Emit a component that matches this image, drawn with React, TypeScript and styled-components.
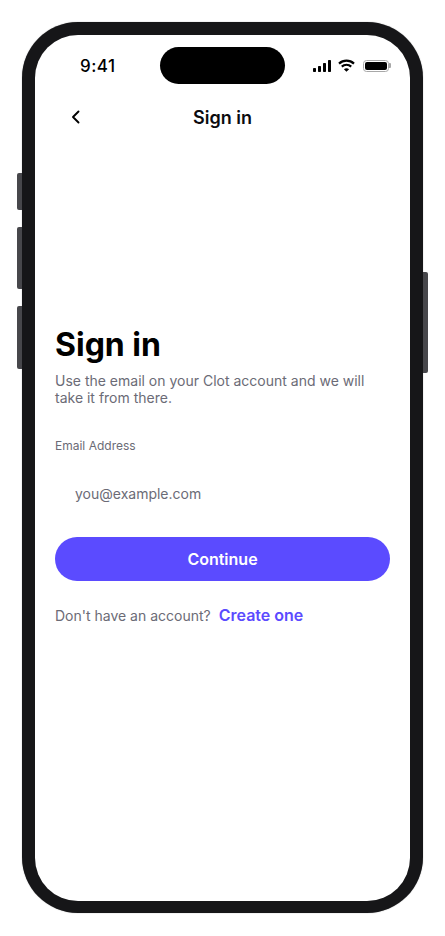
import React from "react";
import styled, { createGlobalStyle } from "styled-components";

const GlobalStyle = createGlobalStyle`
  html, body {
    margin: 0;
    padding: 0;
    background: #fff;
  }
  * {
    box-sizing: border-box;
  }
`;

function App() {
  return (
    <>
      <GlobalStyle />
      <Page>
        <Phone>
          <SideButton $side="left" $top={151} $height={37} />
          <SideButton $side="left" $top={205} $height={62} />
          <SideButton $side="left" $top={284} $height={63} />
          <SideButton $side="right" $top={250} $height={101} />
          <Screen>
            <StatusBar>
              <Time>9:41</Time>
              <Island />
              <StatusIcons>
                <svg width="18" height="12" viewBox="0 0 18 12" fill="#000">
                  <rect x="0" y="8" width="3" height="4" rx="0.8" />
                  <rect x="5" y="6" width="3" height="6" rx="0.8" />
                  <rect x="10" y="3" width="3" height="9" rx="0.8" />
                  <rect x="15" y="0" width="3" height="12" rx="0.8" />
                </svg>
                <svg width="17" height="13" viewBox="0 0 17 13" fill="none" stroke="#000" strokeWidth="2.2">
                  <path d="M1 4.6C5.2 0.6 11.8 0.6 16 4.6" />
                  <path d="M3.8 7.6C6.4 5.1 10.6 5.1 13.2 7.6" />
                  <path d="M8.5 12.8L5.9 10.2C7.4 8.9 9.6 8.9 11.1 10.2Z" fill="#000" stroke="none" />
                </svg>
                <Battery>
                  <BatteryFill />
                </Battery>
              </StatusIcons>
            </StatusBar>
            <NavBar>
              <BackButton aria-label="Back">
                <svg width="10" height="14" viewBox="0 0 10 14" fill="none" stroke="#000" strokeWidth="1.9" strokeLinecap="round" strokeLinejoin="round">
                  <path d="M7.5 1.5L2 7l5.5 5.5" />
                </svg>
              </BackButton>
              <NavTitle>Sign in</NavTitle>
            </NavBar>
            <Content>
              <Title>Sign in</Title>
              <Subtitle>Use the email on your Clot account and we will take it from there.</Subtitle>
              <Label htmlFor="email">Email Address</Label>
              <EmailInput id="email" type="email" placeholder="you@example.com" />
              <ContinueButton>Continue</ContinueButton>
              <Footer>
                <FooterText>Don't have an account?</FooterText>
                <CreateLink>Create one</CreateLink>
              </Footer>
            </Content>
          </Screen>
        </Phone>
      </Page>
    </>
  );
}

export default App;

const Page = styled.div`
  width: 445px;
  height: 936px;
  padding: 22px 22px 23px 22px;
  font-family: Inter, "Liberation Sans", sans-serif;
  overflow: hidden;
`;

const Phone = styled.div`
  position: relative;
  width: 401px;
  height: 891px;
  padding: 13px;
  border-radius: 56px;
  background: #161618;
  box-shadow: 0 0 1px rgba(0, 0, 0, 0.5);
`;

const SideButton = styled.div<{ $side: "left" | "right"; $top: number; $height: number }>`
  position: absolute;
  top: ${(props) => props.$top}px;
  height: ${(props) => props.$height}px;
  width: 5px;
  background: #47474b;
  ${(props) =>
    props.$side === "left"
      ? "left: -5px; border-radius: 2px 0 0 2px;"
      : "right: -5px; border-radius: 0 2px 2px 0;"}
`;

const Screen = styled.div`
  display: flex;
  flex-direction: column;
  width: 375px;
  height: 866px;
  border-radius: 43px;
  background: #fff;
  overflow: hidden;
`;

const StatusBar = styled.div`
  display: flex;
  align-items: center;
  height: 37px;
  margin-top: 12px;
  padding: 0 21px 0 45px;
`;

const Time = styled.div`
  width: 80px;
  font-size: 17px;
  font-weight: 500;
  letter-spacing: 0.5px;
  color: #000;
`;

const Island = styled.div`
  width: 125px;
  height: 37px;
  border-radius: 19px;
  background: #000;
`;

const StatusIcons = styled.div`
  display: flex;
  align-items: center;
  gap: 7px;
  margin-left: auto;
`;

const Battery = styled.div`
  position: relative;
  width: 26px;
  height: 12px;
  margin-left: 1px;
  padding: 1px;
  border: 1px solid #a8a8a8;
  border-radius: 3.5px;

  &::after {
    content: "";
    position: absolute;
    top: 2.5px;
    right: -3px;
    width: 2px;
    height: 5px;
    border-radius: 0 1px 1px 0;
    background: #a8a8a8;
  }
`;

const BatteryFill = styled.div`
  width: 100%;
  height: 100%;
  border-radius: 2px;
  background: #000;
`;

const NavBar = styled.div`
  position: relative;
  display: flex;
  align-items: center;
  justify-content: center;
  height: 44px;
  margin-top: 11px;
`;

const BackButton = styled.button`
  position: absolute;
  top: 15px;
  left: 36px;
  display: flex;
  padding: 0;
  border: 0;
  background: none;
`;

const NavTitle = styled.div`
  font-size: 18px;
  font-weight: 600;
  color: #0b0b0f;
`;

const Content = styled.div`
  display: flex;
  flex-direction: column;
  padding: 0 20px;
  margin-top: 187px;
`;

const Title = styled.h1`
  margin: 0;
  font-size: 32px;
  line-height: 38px;
  font-weight: 700;
  color: #000;
`;

const Subtitle = styled.p`
  margin: 8px 0 0;
  font-size: 14px;
  line-height: 17px;
  color: #6b6b76;
`;

const Label = styled.label`
  margin-top: 32px;
  font-size: 12px;
  line-height: 16px;
  color: #6b6b76;
`;

const EmailInput = styled.input`
  height: 44px;
  margin-top: 17px;
  padding: 0 20px;
  border: 0;
  outline: 0;
  background: transparent;
  font-family: inherit;
  font-size: 14px;
  color: #0b0b0f;

  &::placeholder {
    color: #6b6b76;
    opacity: 1;
  }
`;

const ContinueButton = styled.button`
  height: 44px;
  margin-top: 22px;
  border: 0;
  border-radius: 22px;
  background: #5b4bff;
  font-family: inherit;
  font-size: 16px;
  font-weight: 600;
  color: #fff;
`;

const Footer = styled.div`
  display: flex;
  align-items: center;
  gap: 8px;
  margin-top: 24px;
`;

const FooterText = styled.span`
  font-size: 14px;
  color: #6b6b76;
`;

const CreateLink = styled.a`
  font-size: 16px;
  font-weight: 600;
  color: #5b4bff;
`;
